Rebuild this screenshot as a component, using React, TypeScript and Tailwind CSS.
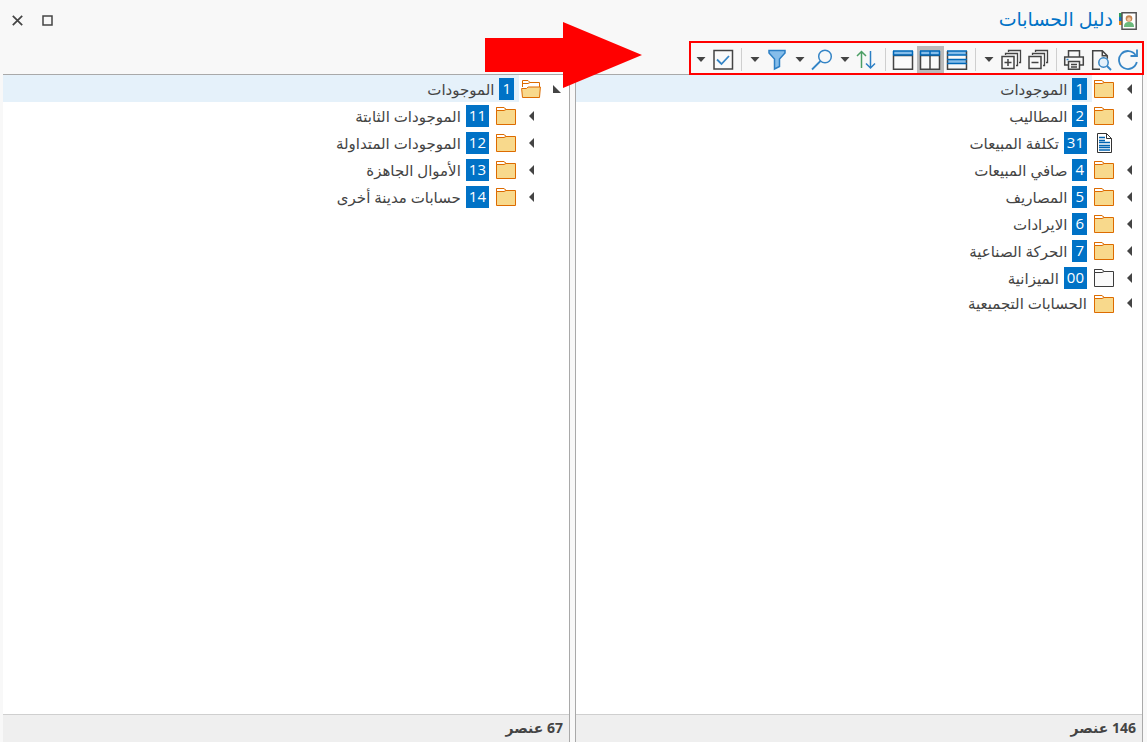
import type { ReactNode } from "react";
import { clsx } from "clsx";

interface Account {
  code?: string;
  name: string;
  kind?: "folder" | "open" | "empty" | "doc";
  level?: number;
}

const mainAccounts: Account[] = [
  { code: "1", name: "الموجودات" },
  { code: "2", name: "المطاليب" },
  { code: "31", name: "تكلفة المبيعات", kind: "doc" },
  { code: "4", name: "صافي المبيعات" },
  { code: "5", name: "المصاريف" },
  { code: "6", name: "الايرادات" },
  { code: "7", name: "الحركة الصناعية" },
  { code: "00", name: "الميزانية", kind: "empty" },
  { name: "الحسابات التجميعية" },
];

const subAccounts: Account[] = [
  { code: "1", name: "الموجودات", kind: "open" },
  { code: "11", name: "الموجودات الثابتة", level: 1 },
  { code: "12", name: "الموجودات المتداولة", level: 1 },
  { code: "13", name: "الأموال الجاهزة", level: 1 },
  { code: "14", name: "حسابات مدينة أخرى", level: 1 },
];

function AccountIcon({ kind }: { kind: NonNullable<Account["kind"]> }) {
  if (kind === "doc") {
    return (
      <svg width="20" height="21" viewBox="-1 -1 20 21" fill="none" className="shrink-0">
        <path d="M2.5.5h9l5 5v14h-14z" fill="#fff" stroke="#333" />
        <path d="M11.5.5v5h5" stroke="#333" />
        <path d="M4 4.5h6M4 7.5h6M4 9.5h11M4 12.5h11M4 14.5h11M4 17h11" stroke="#0063b1" strokeWidth="1.4" />
      </svg>
    );
  }
  if (kind === "open") {
    return (
      <svg width="20" height="21" viewBox="0 -1 20 21" fill="none" className="shrink-0">
        <path d="M1.5 8V1.5h5.500l2 2h9.500V8" fill="#fff" stroke="#dd6b00" />
        <path d="M2 4.500h5l2-1" stroke="#dd6b00" />
        <path d="M.6 9.500h5l1.5-1.5h12.300l-.9 10.500h-17z" fill="#f8d98c" stroke="#dd6b00" />
      </svg>
    );
  }
  const empty = kind === "empty";
  const stroke = empty ? "#3c3c3c" : "#dd6b00";
  return (
    <svg width="20" height="21" viewBox="0 -1 20 21" fill="none" className="shrink-0">
      <path d="M.5 18.5v-17h7.500l2 2h9.500v15z" fill={empty ? "#fafafa" : "#f8d98c"} stroke={stroke} />
      <path d="M.5 4.500h7.500l2-1-2-2H.5z" fill="#fff" stroke={stroke} />
    </svg>
  );
}

function AccountRow({ account, selected }: { account: Account; selected: boolean }) {
  const { code, name, kind = "folder", level = 0 } = account;
  return (
    <li className={clsx("flex items-center", code ? "h-[27px]" : "h-6", level === 1 && "pr-[25px]")}>
      <div className="flex w-7 shrink-0">
        {kind !== "doc" && (
          <button type="button" aria-label={name} aria-expanded={kind === "open"} className="flex w-full items-center pr-2 text-[#444]">
            {kind === "open" ? (
              <svg width="9" height="10" viewBox="0 0 9 10"><path d="M1 1v8h8z" fill="currentColor" /></svg>
            ) : (
              <svg width="8" height="10" viewBox="0 0 8 10"><path d="M6 0v10L1 5z" fill="currentColor" /></svg>
            )}
          </button>
        )}
      </div>
      <AccountIcon kind={kind} />
      <div className={clsx("mr-0.5 flex h-full flex-1 items-center gap-[5px] pr-[5px] text-[#444]", selected && "bg-[#e5f1fa]")}>
        {code && <span className="h-[22px] bg-[#0072c6] px-[3px] leading-5 text-white">{code}</span>}
        <span className="whitespace-nowrap">{name}</span>
      </div>
    </li>
  );
}

function AccountPanel({ accounts, count, className }: { accounts: Account[]; count: number; className?: string }) {
  return (
    <section className={clsx("flex min-w-0 flex-1 flex-col border-t border-r border-[#a9a9a9] bg-white", className)}>
      <ul className="flex-1 text-[15px] leading-5">
        {accounts.map((account, i) => (
          <AccountRow key={account.name} account={account} selected={i === 0} />
        ))}
      </ul>
      <footer className="h-7 border-t border-[#cfcfcf] bg-[#efefef] px-1.5 text-sm leading-[26px] font-bold text-[#444]">
        {count} عنصر
      </footer>
    </section>
  );
}

function ToolButton({ label, active, children }: { label: string; active?: boolean; children: ReactNode }) {
  return (
    <button type="button" aria-label={label} className={clsx("flex h-full w-[27px] items-center justify-center", active && "bg-[#bababa]")}>
      <svg width="23" height="23" viewBox="0 -1 23 23" fill="none" stroke="#444" strokeWidth="1.5">
        {children}
      </svg>
    </button>
  );
}

function Caret({ label }: { label: string }) {
  return (
    <button type="button" aria-label={label} className="flex h-full w-[18px] items-center justify-center text-[#444]">
      <svg width="10" height="5" viewBox="0 0 10 5"><path d="M.5 0h9L5 5z" fill="currentColor" /></svg>
    </button>
  );
}

function Separator() {
  return (
    <div className="flex h-full w-[9px] justify-center py-0.5">
      <div className="w-px bg-[#cfcfcf]" />
    </div>
  );
}

function Toolbar() {
  return (
    <div className="relative z-10 -mb-px flex h-[34px] items-stretch border-2 border-[#f00] pt-[3px] pl-px">
      <ToolButton label="تحديث">
        <path d="M18.5 6a9 9 0 1 0 1.3 7" stroke="#3585c6" strokeWidth="1.8" />
        <path d="M20 .500v6.500h-6.500" stroke="#3585c6" strokeWidth="1.8" />
      </ToolButton>
      <ToolButton label="معاينة">
        <path d="M10 20.3H2.7V1.7h9.6l5 5v3M12.3 1.7v5h5" />
        <circle cx="13.5" cy="13.5" r="4.7" fill="#e4f1fb" stroke="#3585c6" />
        <path d="m17 17 4 4" stroke="#3585c6" strokeWidth="2" />
      </ToolButton>
      <ToolButton label="طباعة">
        <path d="M5.5 8V1.7h11V8M5 16H1.7V8h18.6v8H17" />
        <path d="M5.5 12.5h11v7.8h-11zM8 15.5h6M8 18h6" />
        <path d="M3.5 10.5h2" stroke="#3585c6" />
      </ToolButton>
      <Separator />
      <ToolButton label="طي الكل">
        <path d="M2 7.500h12v12H2zM4.500 13.500h7" />
        <path d="M5.500 6V4.500h12v12H16M8.500 3V1.500h12v12H19" strokeWidth="1.3" />
      </ToolButton>
      <ToolButton label="توسيع الكل">
        <path d="M2 7.500h12v12H2zM4.500 13.500h7M8 10v7" />
        <path d="M5.500 6V4.500h12v12H16M8.500 3V1.500h12v12H19" strokeWidth="1.3" />
      </ToolButton>
      <Caret label="خيارات التوسيع" />
      <Separator />
      <ToolButton label="عرض أفقي">
        <path d="M1 2h20v4H1zM1 11h20v4H1z" fill="#85bdea" stroke="none" />
        <path d="M1.5 2v18.3h19V2" />
        <path d="M1 2h20M1 6h20M1 10.5h20M1 14.5h20" stroke="#0068b8" />
      </ToolButton>
      <ToolButton label="عرض عمودي" active>
        <path d="M1 2h20v4H1z" fill="#85bdea" stroke="none" />
        <path d="M1.5 6.5h19v13.8h-19z" fill="#fafafa" />
        <path d="M11 6v14" />
        <path d="M1 2h20M1 6h20M11 2v4M1.5 2v4M20.5 2v4" stroke="#0068b8" />
      </ToolButton>
      <ToolButton label="نافذة واحدة">
        <path d="M1 2h20v4H1z" fill="#85bdea" stroke="none" />
        <path d="M1.5 6.5h19v13.8h-19z" fill="#fafafa" />
        <path d="M1 2h20M1 6h20M1.5 2v4M20.5 2v4" stroke="#0068b8" />
      </ToolButton>
      <Separator />
      <ToolButton label="ترتيب">
        <path d="M5.500 19V2.500M1 7l4.500-4.500L10 7" stroke="#4b9e64" />
        <path d="M14.500 2v17M10 14.500l4.500 4.500 4.500-4.500" stroke="#2c7fc4" />
      </ToolButton>
      <Caret label="خيارات البحث" />
      <ToolButton label="بحث">
        <circle cx="14" cy="7.5" r="6.300" stroke="#3585c6" />
        <path d="m9.5 12-8.5 8.5" stroke="#3585c6" strokeWidth="1.8" />
      </ToolButton>
      <Caret label="خيارات التصفية" />
      <ToolButton label="تصفية">
        <path d="M3 1.500h16V4l-5.500 6v7.500L8.500 20V10L3 4z" fill="#85bdea" stroke="#2c7fc4" />
      </ToolButton>
      <Caret label="خيارات التحديد" />
      <Separator />
      <ToolButton label="تحديد">
        <path d="M2 1.500h18.500v18.500H2z" fill="#fafafa" />
        <path d="m5 10.500 4.500 4.500L17 7" stroke="#3585c6" strokeWidth="1.8" />
      </ToolButton>
      <Caret label="المزيد" />
    </div>
  );
}

export default function App() {
  return (
    <div
      dir="rtl"
      className="relative flex h-screen flex-col overflow-hidden bg-[#f8f8f8] pr-1 pl-[3px] font-['Open_Sans','Noto_Sans','DejaVu_Sans',sans-serif]"
    >
      <header className="flex h-[41px] shrink-0 items-center justify-between pr-1.5 pl-2">
        <div className="flex items-center gap-1.5 pb-1">
          <svg width="18" height="18" viewBox="0 0 18 18" className="mt-1">
            <path d="M0 1h4v4H0z" fill="#2e9e5b" />
            <path d="M0 5h4v4H0z" fill="#1976c4" />
            <path d="M0 9h4v4H0z" fill="#e98b1a" />
            <path d="M3 .8h14.2v16.4H3z" fill="#fff" stroke="#555" strokeWidth="1.5" />
            <path d="M5 15c0-4 2-5 5-5s5 1 5 5z" fill="#6cba7d" />
            <circle cx="10" cy="6.500" r="3.300" fill="#c58450" />
            <circle cx="10" cy="7.200" r="1.900" fill="#f3c9a0" />
          </svg>
          <h1 className="text-[19px] leading-7 font-medium text-[#0072c6]">دليل الحسابات</h1>
        </div>
        <div className="flex items-center gap-[17px]">
          <button type="button" aria-label="تكبير" className="flex size-[13px] items-center justify-center">
            <svg width="11" height="11" viewBox="0 0 11 11"><path d="M1 1h9v9H1z" fill="none" stroke="#444" strokeWidth="1.5" /></svg>
          </button>
          <button type="button" aria-label="إغلاق" className="flex size-[13px] items-center justify-center">
            <svg width="11" height="11" viewBox="0 0 11 11"><path d="m.8.8 9.400 9.400m0-9.400L.8 10.200" stroke="#444" strokeWidth="1.7" /></svg>
          </button>
        </div>
      </header>

      <div className="-mr-1 flex shrink-0 pr-[3px]">
        <Toolbar />
      </div>

      <main className="flex min-h-0 flex-1 gap-[5px]">
        <AccountPanel accounts={mainAccounts} count={146} className="border-l" />
        <AccountPanel accounts={subAccounts} count={67} />
      </main>

      <svg width="158" height="66" viewBox="0 0 158 66" className="absolute top-[22px] left-[485px] z-20">
        <path d="M0 16h78V0l79 33-79 33V50H0z" fill="#f00" />
      </svg>
    </div>
  );
}
